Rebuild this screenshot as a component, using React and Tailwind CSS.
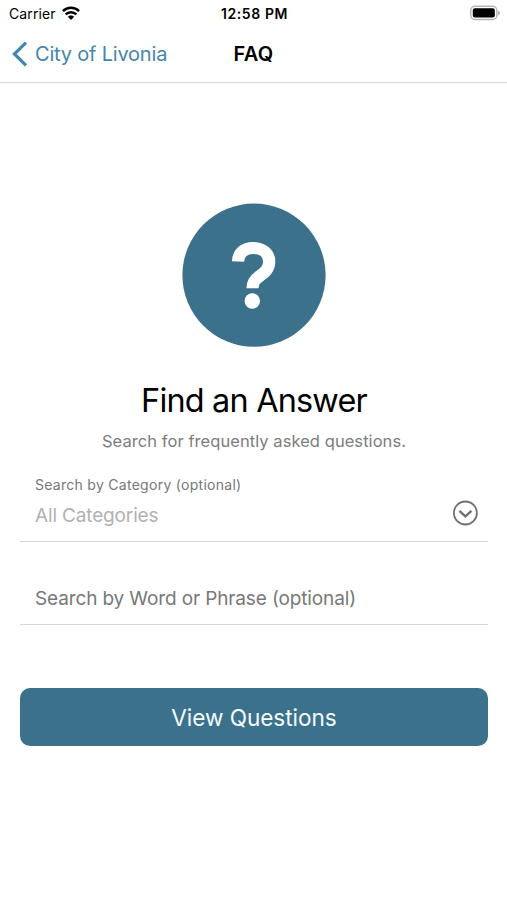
function StatusBar() {
  return (
    <div className="grid h-[27px] grid-cols-3 items-center pl-[9px] pr-[7px] text-black">
      <div className="flex items-center gap-[6px]">
        <span className="text-[14px] leading-[27px] tracking-[0.1px]">Carrier</span>
        <svg className="-mt-[2px]" width="18" height="14" viewBox="0 0 19 14" preserveAspectRatio="none" fill="none" stroke="#000" strokeWidth="2.6">
          <path d="M1 5.1C5.6 0.7 13.4 0.7 18 5.1" />
          <path d="M3.9 8.4C7 5.5 12 5.5 15.1 8.4" />
          <path d="M6.2 10.8C8 8.9 11 8.9 12.8 10.8L9.5 14Z" fill="#000" stroke="none" />
        </svg>
      </div>
      <span className="text-center text-[14px] font-semibold leading-[27px] tracking-[0.6px]">12:58 PM</span>
      <svg className="-mt-[1px] justify-self-end" width="30" height="16" viewBox="0 0 30 16">
        <rect x="0.8" y="1.3" width="26" height="13.2" rx="4" fill="#fff" stroke="#b5b5b5" strokeWidth="1.4" />
        <rect x="2.8" y="3.3" width="22" height="9.2" rx="2" fill="#000" />
        <path d="M28.2 5.6C30.4 6.6 30.4 9.3 28.2 10.3Z" fill="#a5a5a5" />
      </svg>
    </div>
  );
}

function NavBar() {
  return (
    <header className="grid h-[56px] grid-cols-3 items-center border-b border-[#d8d8d8] px-[12px] pb-[2px]">
      <a className="flex items-center gap-[7px] whitespace-nowrap text-[#4585ad]">
        <svg width="16" height="26" viewBox="0 0 16 26" fill="none" stroke="currentColor" strokeWidth="3.2">
          <path d="M14 1.6L2.4 13L14 24.4" />
        </svg>
        <span className="text-[20px] tracking-[-0.2px]">City of Livonia</span>
      </a>
      <h1 className="text-center text-[20px] font-semibold tracking-[0.2px] text-black">FAQ</h1>
    </header>
  );
}

function QuestionBadge() {
  return (
    <svg className="mx-auto block" width="144" height="144" viewBox="0 0 144 144" fill="none">
      <circle cx="72" cy="72.2" r="71.6" fill="#3c718c" />
      <path
        d="M56 58.5C56.3 49.8 62.5 45 71 45C80.5 45 87.2 50.2 87.2 58.6C87.2 66 82.8 69.6 77.8 73C72.5 76.6 70.5 79.4 70.5 85.2"
        stroke="#fff"
        strokeWidth="12.2"
      />
      <circle cx="70.3" cy="98" r="7.7" fill="#fff" />
    </svg>
  );
}

export default function App() {
  return (
    <div className="flex h-[900px] w-[507px] flex-col bg-white font-['Inter','Liberation_Sans',sans-serif]">
      <StatusBar />
      <NavBar />
      <main className="flex flex-col pl-[20.4px] pr-[19.4px] pt-[120px]">
        <QuestionBadge />
        <h2 className="mt-[32px] text-center text-[32.4px] leading-[44px] tracking-[-0.8px] text-black">Find an Answer</h2>
        <p className="mt-[6px] text-center text-[16.5px] leading-[24px] tracking-[0.06px] text-[#7d7d7d]">
          Search for frequently asked questions.
        </p>
        <div className="mt-[22px] flex h-[67px] items-center justify-between border-b border-[#d6d6d6] pl-[14.6px] pr-[9.6px]">
          <div className="flex h-full flex-col">
            <span className="text-[14px] leading-[20px] tracking-[0.28px] text-[#787878]">Search by Category (optional)</span>
            <span className="mt-[7px] text-[19px] leading-[28px] tracking-[-0.15px] text-[#b2b2b2]">All Categories</span>
          </div>
          <svg className="mt-[9px]" width="26" height="26" viewBox="0 0 26 26" fill="none" stroke="#707070" strokeWidth="1.8">
            <circle cx="13.4" cy="13" r="11.5" />
            <path d="M7.4 10.8L13.4 16.4L19.4 10.8" strokeWidth="2.3" />
          </svg>
        </div>
        <div className="flex h-[83px] items-end border-b border-[#d6d6d6] pb-[11px] pl-[14.6px]">
          <span className="text-[19px] leading-[28px] tracking-[-0.13px] text-[#787878]">Search by Word or Phrase (optional)</span>
        </div>
        <button className="mt-[63px] h-[58.4px] rounded-[10px] bg-[#3c718c] pt-[2px] text-[22.6px] tracking-[-0.05px] text-[#f4fbff]">View Questions</button>
      </main>
    </div>
  );
}
